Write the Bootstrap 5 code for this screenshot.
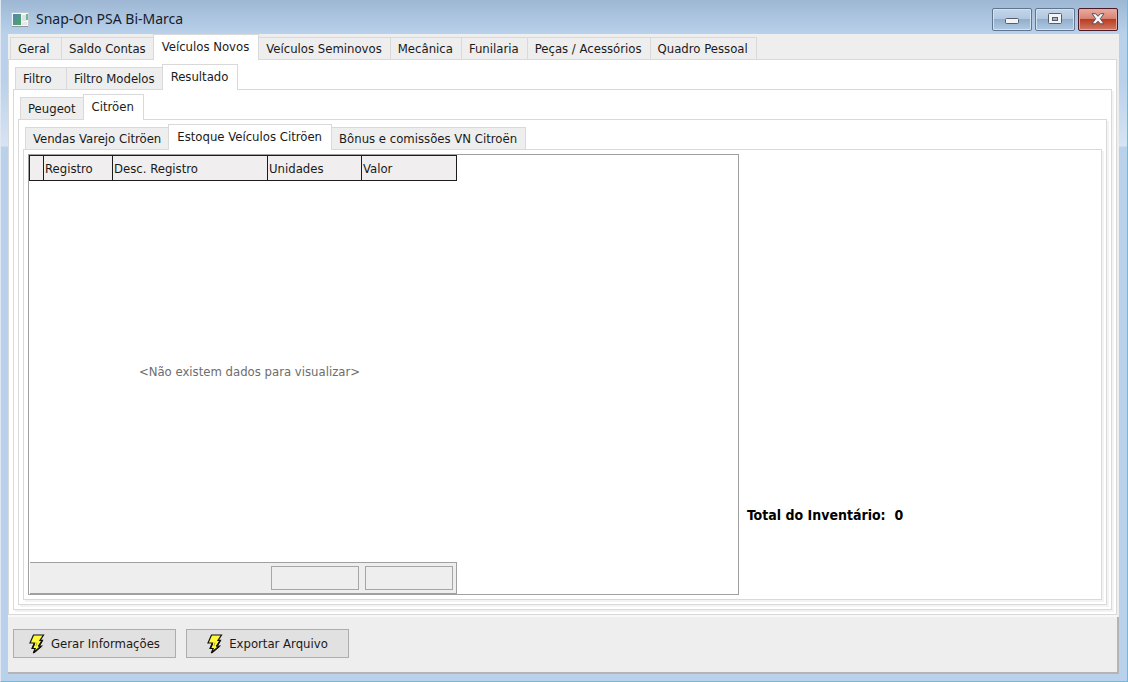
<!DOCTYPE html>
<html lang="pt-BR">
<head>
<meta charset="utf-8">
<meta name="viewport" content="width=device-width, initial-scale=1">
<title>Snap-On PSA Bi-Marca</title>
<link href="https://cdn.jsdelivr.net/npm/bootstrap@5.3.0/dist/css/bootstrap.min.css" rel="stylesheet">
<style>
  body { font: 13px/16px "DejaVu Sans Condensed", "DejaVu Sans", sans-serif; color: #1a1a1a; }
  .app-frame { min-height: 100vh; padding: 0 8px 7px 7px;
    background: linear-gradient(#9db7d4 0, #b9d1ea 34px, #b9d1ea 80px, #d6e4f4 146px, #b9d1ea 147px);
    border-left: 1px solid #dfe8f2; border-right: 1px solid #57c4e2; border-bottom: 1px solid #57c4e2; }
  .title-bar { height: 34px; padding: 0 1px 0 3px; }
  .title-text { font: 14px/20px "Noto Sans", "Open Sans", sans-serif; color: #16202c; padding: 4px 0 0 7px; }
  .win-group { gap: 3px; }
  .win-btn { width: 40px; height: 23px; padding: 0; border: 1px solid #5f7590; border-radius: 2px; box-shadow: inset 0 0 0 1px #d3e2f1;
    background: linear-gradient(#c3d5e8 0, #b3c9e0 45%, #93aecb 50%, #b0cae4 100%); }
  .win-close { border-color: #4c1a26; box-shadow: inset 0 0 0 1px #e5a79c;
    background: linear-gradient(#e9aca0 0, #d98473 45%, #bb3c22 50%, #cf7b66 100%); }
  .client { background: #eee; }
  .tab-strip { height: 26px; margin: 0 0 -1px 2px; position: relative; flex: none; }
  .tab-strip .nav-link { height: 23px; min-width: 52px; margin-right: -1px; padding: 3px 8px 0 7px; color: #1a1a1a; white-space: nowrap;
    background: #eee; border: 1px solid #d9d9d9; border-radius: 0; }
  .tab-strip .nav-link.active { height: 26px; margin-left: -1px; padding: 4px 9px 0 8px; background: #fff; border-bottom: 0; position: relative; z-index: 1; }
  .tab-pane-box { background: #fff; border: 1px solid #d9d9d9; padding: 4px; }
  .tab-pane-box .tab-pane-box { box-shadow: 2px 2px 0 #f3f3f3; }
  .outer-pane { margin-right: 2px; box-shadow: 0 2px 0 #f8f8f8; }
  .data-box { flex: 0 0 66.5%; border: 1px solid #a0a0a0; }
  .data-grid { width: 428px; height: 100%; border-collapse: collapse; table-layout: fixed; }
  .data-grid .c-mark { width: 14px; }
  .data-grid .c-code { width: 69px; }
  .data-grid .c-desc { width: 155px; }
  .data-grid .c-units { width: 94px; }
  .data-grid th { height: 25px; padding: 2px 0 0 1px; font-weight: 400; background: #f0eeef; border: 1px solid #1c1c1c; }
  .data-grid tfoot td { height: 30px; padding: 3px; background: #eee; border-top: 1px solid #a0a0a0; border-bottom: 1px solid #a0a0a0; }
  .data-grid tfoot td:last-child { border-right: 1px solid #a0a0a0; }
  .data-grid .empty-note { color: #6d6d6d; padding-left: 14px; }
  .sum-box { height: 24px; border: 1px solid #a6a6a6; }
  .total-line { margin: 0 0 72px 8px; font-size: 14px; font-weight: 700; color: #000; }
  .action-bar { gap: 10px; padding: 12px 5px 14px; border-right: 2px solid #b4b4b4; border-bottom: 2px solid #b4b4b4; margin-top: 2px; }
  .action-btn { width: 163px; height: 29px; padding: 0; gap: 6px; border: 1px solid #adadad; background: #e1e1e1; color: #1a1a1a; }
</style>
</head>
<body>
<div class="app-frame d-flex flex-column">
  <header class="title-bar d-flex align-items-center">
    <svg width="18" height="15" viewBox="0 0 18 15" class="mt-1" aria-hidden="true">
      <defs><linearGradient id="g" x2="1" y2="1"><stop stop-color="#4f86b8"/><stop offset="1" stop-color="#4fa65c"/></linearGradient></defs>
      <rect x=".5" y=".5" width="17" height="14" fill="#f6f8f8" stroke="#c3cbd2"/>
      <path d="M1 14.500H17" stroke="#8d979f"/>
      <rect x="2" y="2" width="8" height="11" fill="url(#g)"/>
      <rect x="11" y="3" width="4" height="6" fill="#dde3e4"/><rect x="15" y="2" width="2" height="6" fill="#6fb79a"/>
      <rect x="11" y="10" width="5" height="3" fill="#e4e8e8"/>
    </svg>
    <span class="title-text flex-grow-1">Snap-On PSA Bi-Marca</span>
    <div class="win-group d-flex pt-1">
      <button type="button" class="win-btn d-flex align-items-center justify-content-center" aria-label="Minimizar">
        <svg width="14" height="12"><rect x=".5" y="5.500" width="13" height="5" rx="1" fill="#f4f4f4" stroke="#555c6b"/></svg></button>
      <button type="button" class="win-btn d-flex align-items-center justify-content-center" aria-label="Maximizar">
        <svg width="14" height="12"><rect x=".5" y=".5" width="13" height="10" rx="1" fill="#f4f4f4" stroke="#555c6b"/><rect x="4.500" y="4.500" width="5" height="3" fill="#9db4ce" stroke="#555c6b"/></svg></button>
      <button type="button" class="win-btn win-close d-flex align-items-center justify-content-center" aria-label="Fechar">
        <svg width="14" height="12" viewBox="0 0 14 12"><path d="M1 .7H4.600L7 3.300 9.400.7H13L9.300 5.700 13 10.800H9.400L7 8.200 4.600 10.800H1L4.700 5.700Z" fill="#f6f6f6" stroke="#55505f"/></svg></button>
    </div>
  </header>

  <main class="client d-flex flex-column flex-grow-1">
    <nav class="tab-strip nav flex-nowrap align-items-end">
      <a class="nav-link" href="#">Geral</a>
      <a class="nav-link" href="#">Saldo Contas</a>
      <a class="nav-link active" href="#">Veículos Novos</a>
      <a class="nav-link" href="#">Veículos Seminovos</a>
      <a class="nav-link" href="#">Mecânica</a>
      <a class="nav-link" href="#">Funilaria</a>
      <a class="nav-link" href="#">Peças / Acessórios</a>
      <a class="nav-link" href="#">Quadro Pessoal</a>
    </nav>
    <section class="tab-pane-box outer-pane d-flex flex-column flex-grow-1">
      <nav class="tab-strip nav flex-nowrap align-items-end">
        <a class="nav-link" href="#">Filtro</a>
        <a class="nav-link" href="#">Filtro Modelos</a>
        <a class="nav-link active" href="#">Resultado</a>
      </nav>
      <section class="tab-pane-box d-flex flex-column flex-grow-1">
        <nav class="tab-strip nav flex-nowrap align-items-end">
          <a class="nav-link" href="#">Peugeot</a>
          <a class="nav-link active" href="#">Citröen</a>
        </nav>
        <section class="tab-pane-box d-flex flex-column flex-grow-1">
          <nav class="tab-strip nav flex-nowrap align-items-end">
            <a class="nav-link" href="#">Vendas Varejo Citröen</a>
            <a class="nav-link active" href="#">Estoque Veículos Citröen</a>
            <a class="nav-link" href="#">Bônus e comissões VN Citroën</a>
          </nav>
          <section class="tab-pane-box d-flex flex-grow-1">
            <div class="data-box">
              <table class="data-grid">
                <colgroup><col class="c-mark"><col class="c-code"><col class="c-desc"><col class="c-units"><col></colgroup>
                <thead><tr><th></th><th scope="col">Registro</th><th scope="col">Desc. Registro</th><th scope="col">Unidades</th><th scope="col">Valor</th></tr></thead>
                <tbody><tr><td colspan="5" class="empty-note text-center align-middle">&lt;Não existem dados para visualizar&gt;</td></tr></tbody>
                <tfoot><tr><td colspan="3"></td><td><div class="sum-box"></div></td><td><div class="sum-box"></div></td></tr></tfoot>
              </table>
            </div>
            <p class="total-line align-self-end">Total do Inventário:&nbsp; 0</p>
          </section>
        </section>
      </section>
    </section>
    <footer class="action-bar d-flex">
      <button type="button" class="action-btn d-flex align-items-center justify-content-center">
        <svg width="16" height="20" viewBox="0 0 16 20" aria-hidden="true"><path d="M4.500 1H14.500L11 6.300H13.500L10 12H12.500L4.300 19 6.200 14.500H3L5.500 9H1Z" fill="#fff93a" stroke="#111" stroke-width="1.200"/><path d="M13 7 9.500 12.500M12 12.500 5 18.500M5.500 9.500 3.500 14.300" stroke="#111" stroke-width="1.500" fill="none"/><path d="M8 8.500 7 12" stroke="#b5ad20" fill="none"/></svg>
        <span>Gerar Informações</span></button>
      <button type="button" class="action-btn d-flex align-items-center justify-content-center">
        <svg width="16" height="20" viewBox="0 0 16 20" aria-hidden="true"><path d="M4.500 1H14.500L11 6.300H13.500L10 12H12.500L4.300 19 6.200 14.500H3L5.500 9H1Z" fill="#fff93a" stroke="#111" stroke-width="1.200"/><path d="M13 7 9.500 12.500M12 12.500 5 18.500M5.500 9.500 3.500 14.300" stroke="#111" stroke-width="1.500" fill="none"/><path d="M8 8.500 7 12" stroke="#b5ad20" fill="none"/></svg>
        <span>Exportar Arquivo</span></button>
    </footer>
  </main>
</div>
<script src="https://cdn.jsdelivr.net/npm/bootstrap@5.3.0/dist/js/bootstrap.bundle.min.js"></script>
</body>
</html>
